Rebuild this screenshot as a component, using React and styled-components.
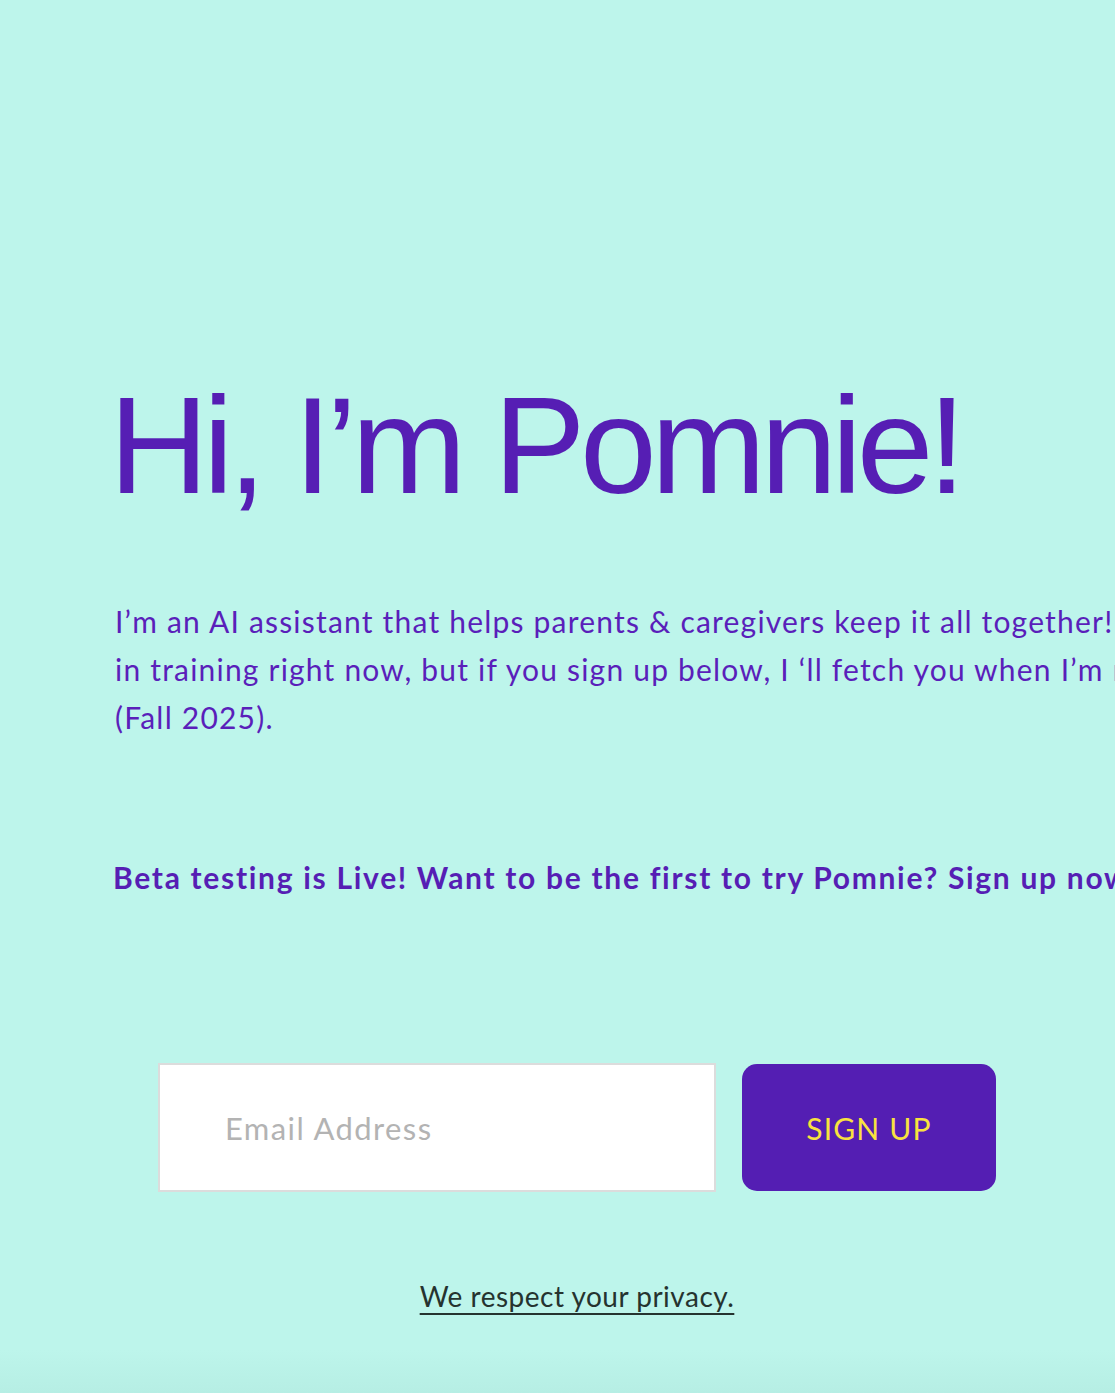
import React from "react";
import styled, { createGlobalStyle } from "styled-components";

const Global = createGlobalStyle`
  html, body {
    margin: 0;
    padding: 0;
    background: #bdf5eb;
    overflow-x: hidden;
  }
  body {
    font-family: Lato, "Noto Sans", sans-serif;
  }
`;

const Page = styled.main`
  min-height: 1393px;
  background: linear-gradient(to bottom, #bdf5eb 0, #bdf5eb 1350px, #b6eee4 1393px);
  padding: 370px 0 0 115px;
  box-sizing: border-box;
`;

const Column = styled.div`
  width: 924px;
  display: flex;
  flex-direction: column;
`;

const Title = styled.h1`
  margin: 0 0 0 -6px;
  font-family: "Liberation Sans", Arial, sans-serif;
  font-weight: 400;
  font-size: 138px;
  line-height: 150px;
  letter-spacing: -5.6px;
  color: #561eb4;
  white-space: nowrap;
`;

const Intro = styled.p`
  margin: 77px 0 0;
  font-size: 30px;
  line-height: 48px;
  letter-spacing: 1.2px;
  color: #5a1fba;
  white-space: nowrap;
`;

const Beta = styled.p`
  margin: 112px 0 0 -2px;
  font-size: 30px;
  font-weight: 700;
  line-height: 48px;
  letter-spacing: 1.7px;
  color: #561eb4;
  white-space: nowrap;
`;

const Form = styled.form`
  margin-top: 162px;
  display: flex;
  justify-content: center;
  align-items: center;
  gap: 26px;
`;

const Email = styled.input`
  width: 558px;
  height: 129px;
  box-sizing: border-box;
  border: 2px solid #dcdcdc;
  background: #fff;
  padding: 0 0 0 65px;
  font-family: Lato, "Noto Sans", sans-serif;
  font-size: 31px;
  letter-spacing: 1.4px;
  color: #333;
  outline: none;
  &::placeholder {
    color: #b3b3b3;
  }
`;

const Submit = styled.button`
  width: 254px;
  height: 127px;
  border: none;
  border-radius: 15px;
  background: #541eb3;
  color: #f8e23f;
  font-family: Lato, "Noto Sans", sans-serif;
  font-size: 30px;
  letter-spacing: 1.2px;
  cursor: pointer;
`;

const Privacy = styled.a`
  align-self: center;
  margin-top: 84px;
  font-size: 28px;
  line-height: 40px;
  letter-spacing: 0.5px;
  color: #25332f;
  text-decoration: underline;
  text-underline-offset: 6px;
  text-decoration-thickness: 2px;
`;

export default function App() {
  return (
    <>
      <Global />
      <Page>
        <Column>
          <Title>Hi, I’m Pomnie!</Title>
          <Intro>
            I’m an AI assistant that helps parents &amp; caregivers keep it all together! I’m
            <br />
            in training right now, but if you sign up below, I ‘ll fetch you when I’m ready
            <br />
            (Fall 2025).
          </Intro>
          <Beta>Beta testing is Live! Want to be the first to try Pomnie? Sign up now!</Beta>
          <Form onSubmit={(e) => e.preventDefault()}>
            <Email type="email" placeholder="Email Address" />
            <Submit type="submit">SIGN UP</Submit>
          </Form>
          <Privacy href="#">We respect your privacy.</Privacy>
        </Column>
      </Page>
    </>
  );
}
